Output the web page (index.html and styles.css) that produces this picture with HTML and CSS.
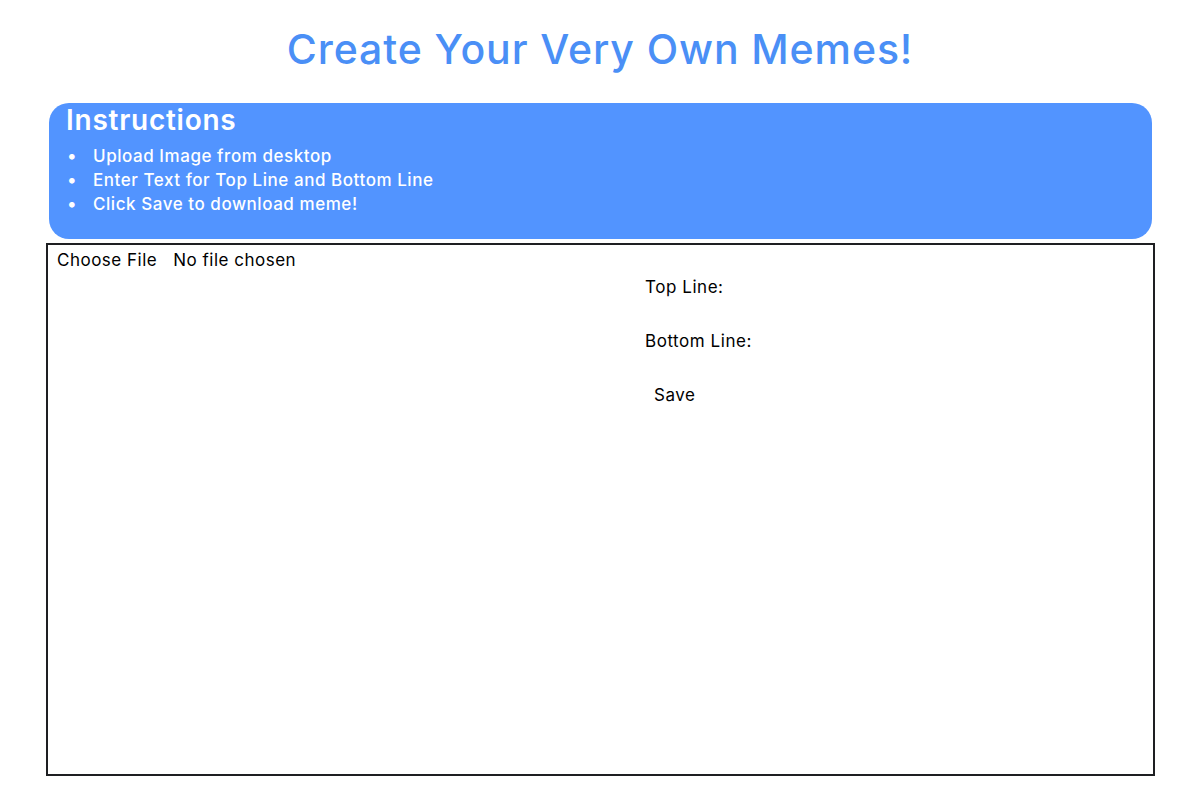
FILE: index.html
```html
<!DOCTYPE html>
<html>
<head>
<meta charset="utf-8">
<link rel="stylesheet" href="styles.css">
</head>
<body>
<h1 class="title">Create Your Very Own Memes!</h1>
<section class="instructions">
  <h2 class="instructions-title">Instructions</h2>
  <ul class="steps">
    <li>Upload Image from desktop</li>
    <li>Enter Text for Top Line and Bottom Line</li>
    <li>Click Save to download meme!</li>
  </ul>
</section>
<main class="editor">
  <div class="left">
    <div class="file-input"><span class="file-btn">Choose File</span><span class="file-name">No file chosen</span></div>
  </div>
  <div class="right">
    <div class="field">Top Line:</div>
    <div class="field">Bottom Line:</div>
    <div class="save">Save</div>
  </div>
</main>
</body>
</html>
```
FILE: styles.css
```css
html, body {
  margin: 0;
  padding: 0;
  background: #fff;
}
body {
  font-family: Inter, "Noto Sans", sans-serif;
  color: #000;
}
.title {
  margin: 0;
  padding-top: 24px;
  height: 79px;
  box-sizing: border-box;
  text-align: center;
  font-size: 41px;
  font-weight: 500;
  color: #4a8ff6;
  letter-spacing: 0.9px;
}
.instructions {
  margin: 24px 48px 0 49px;
  height: 136px;
  box-sizing: border-box;
  background: #5294ff;
  border-radius: 20px;
  padding: 0 17px 0;
  color: #fff;
}
.instructions-title {
  margin: 0;
  font-size: 28px;
  font-weight: 600;
  line-height: 34px;
  letter-spacing: 0.75px;
}
.steps {
  list-style: none;
  margin: 7px 0 0;
  padding-left: 0;
  font-size: 17px;
  font-weight: 500;
  line-height: 24px;
  letter-spacing: 0.55px;
}
.steps li::before {
  content: "\2022";
  display: inline-block;
  width: 27px;
  text-indent: 1px;
  font-size: 18px;
}
.editor {
  margin: 4px 45px 0 46px;
  height: 533px;
  box-sizing: border-box;
  border: 2px solid #1e1f22;
  display: grid;
  grid-template-columns: 597px 1fr;
}
.left {
  padding: 5px 9px;
}
.file-input {
  font-size: 17px;
  line-height: 20px;
  letter-spacing: 0.5px;
  display: flex;
  gap: 16px;
}
.right {
  padding-top: 32px;
  font-size: 17px;
  letter-spacing: 0.55px;
}
.field {
  line-height: 20px;
  margin-bottom: 34px;
}
.save {
  margin-top: 2px;
  margin-left: 9px;
  line-height: 20px;
}
```
